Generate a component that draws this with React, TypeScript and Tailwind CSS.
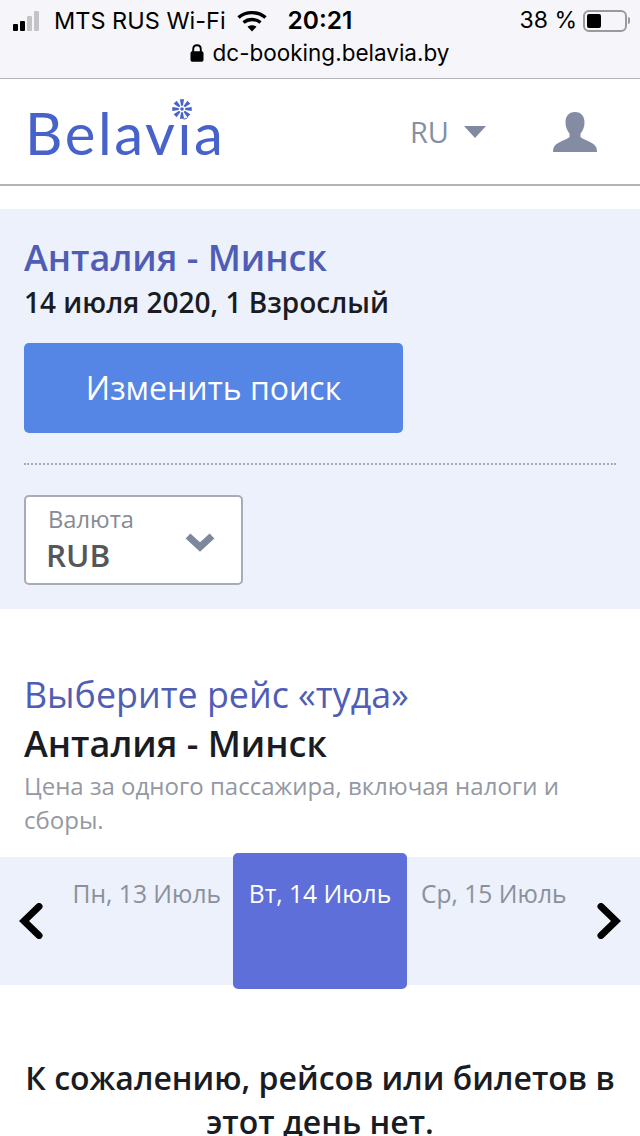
function Signal() {
  return (
    <div className="flex items-end gap-[2px] h-[20px]">
      <span className="w-[5px] h-[7px] rounded-[1px] bg-black" />
      <span className="w-[5px] h-[10px] rounded-[1px] bg-black" />
      <span className="w-[5px] h-[15px] rounded-[1px] bg-[#c4c4c6]" />
      <span className="w-[5px] h-[20px] rounded-[1px] bg-[#c4c4c6]" />
    </div>
  );
}

function Wifi() {
  return (
    <svg width="30" height="22" viewBox="0 0 30 22" fill="none" stroke="black" strokeWidth="3.4">
      <path d="M1.5 7.5C9 1 21 1 28.5 7.5" />
      <path d="M6.5 12.5C11.5 8.5 18.5 8.5 23.5 12.5" />
      <path d="M15 21.5L10.5 16.8C13 14.8 17 14.8 19.5 16.8Z" fill="black" stroke="none" />
    </svg>
  );
}

function Battery() {
  return (
    <div className="flex items-center gap-[1px]">
      <div className="w-[44px] h-[22px] rounded-[6px] border-2 border-[#9a9a9c] p-[2px]">
        <div className="w-[14px] h-full rounded-[2px] bg-black" />
      </div>
      <span className="w-[2px] h-[7px] rounded-r-sm bg-[#9a9a9c]" />
    </div>
  );
}

function LockIcon() {
  return (
    <svg width="14" height="18" viewBox="0 0 14 18" fill="black">
      <path d="M3.2 8V5.2C3.2 2.9 4.8 1.2 7 1.2S10.8 2.9 10.8 5.2V8" fill="none" stroke="black" strokeWidth="1.9" />
      <rect x="0.5" y="7.2" width="13" height="10.6" rx="1.8" />
    </svg>
  );
}

function Flower() {
  return (
    <svg width="20" height="20" viewBox="0 0 20 20" fill="#4763c9">
      <circle cx="10" cy="10" r="1.8" />
      {[0, 45, 90, 135, 180, 225, 270, 315].map((a) => (
        <path key={a} d="M7.9 0.3H12.1L10.9 6.8H9.1Z" transform={`rotate(${a} 10 10)`} />
      ))}
    </svg>
  );
}

function UserIcon() {
  return (
    <svg width="44" height="40" viewBox="0 0 44 40" fill="#838ca3">
      <path d="M22 0C15.5 0 12.5 4.5 12.5 10.5C12.5 15.5 14.5 19 16.5 21.5V25C14 28 4 29.5 1 35C0.4 36.2 0 38 0 40H44C44 38 43.6 36.2 43 35C40 29.5 30 28 27.5 25V21.5C29.5 19 31.5 15.5 31.5 10.5C31.5 4.5 28.5 0 22 0Z" />
    </svg>
  );
}

function Chevron({ dir }: { dir: "left" | "right" }) {
  return (
    <svg width="24" height="36" viewBox="0 0 24 36" fill="none" stroke="black" strokeWidth="7" strokeLinecap="round" strokeLinejoin="miter">
      <path d={dir === "left" ? "M20 3.5L5 18L20 32.5" : "M4 3.5L19 18L4 32.5"} />
    </svg>
  );
}

export default function App() {
  return (
    <div className="w-[640px] h-[1136px] overflow-hidden bg-white font-['Open_Sans',sans-serif]">
      <div className="h-[79px] bg-[#f6f6fa] border-b border-[#b5b5b7] font-['Inter',sans-serif] text-black">
        <div className="h-[41px] flex items-center pl-[13px] pr-[10px] text-[23.5px] leading-none">
          <Signal />
          <span className="ml-[15px]">MTS RUS Wi-Fi</span>
          <span className="ml-[11px]"><Wifi /></span>
          <span className="ml-[21px] text-[24.5px] font-semibold">20:21</span>
          <span className="ml-auto mr-[6px] text-[23px]">38 %</span>
          <Battery />
        </div>
        <div className="flex items-center justify-center gap-[9px] text-[22.5px] leading-none pt-[1px] pr-[1px]">
          <LockIcon />
          <span>dc-booking.belavia.by</span>
        </div>
      </div>

      <header className="h-[107px] border-b-2 border-[#b4b4b4] flex items-center pl-[25px] pr-[43px]">
        <div className="relative mt-[3px]">
          <span className="block font-['Lato',sans-serif] font-normal text-[58px] leading-none text-[#4763c9] tracking-[2.6px]">Belavia</span>
          <span className="absolute left-[147px] top-[-5px] flex rounded-full bg-white"><Flower /></span>
        </div>
        <span className="ml-auto text-[29px] leading-none text-[#868fa3]">RU</span>
        <span className="ml-[15px] w-0 h-0 border-x-[11px] border-x-transparent border-t-[12px] border-t-[#7f8aa1]" />
        <span className="ml-[67px]"><UserIcon /></span>
      </header>

      <section className="mt-[23px] h-[400px] bg-[#ecf1fb] px-[24px] pt-[27px]">
        <h1 className="text-[36px] leading-[44px] font-semibold text-[#4f5db5]">Анталия - Минск</h1>
        <p className="mt-[4px] text-[28px] leading-[36px] font-semibold text-[#1a1c24]">14 июля 2020, 1 Взрослый</p>
        <button className="mt-[23px] w-[379px] h-[90px] rounded-[5px] bg-[#5585e5] text-white text-[32px]">Изменить поиск</button>
        <div className="mt-[30px] w-[592px] border-t-2 border-dotted border-[#a4a9b5]" />
        <div className="mt-[30px] w-[219px] h-[90px] rounded-[5px] border-2 border-[#a8acb8] bg-white flex items-center pl-[20px] pr-[26px]">
          <div className="flex flex-col">
            <span className="pl-[2px] text-[23.7px] leading-[27px] text-[#868b96]">Валюта</span>
            <span className="mt-[2px] text-[31.5px] leading-[40px] font-semibold text-[#54565c]">RUB</span>
          </div>
          <svg className="ml-auto mt-[4px]" width="30" height="20" viewBox="0 0 30 20" fill="none" stroke="#7f879c" strokeWidth="7">
            <path d="M3 4L15 15L27 4" />
          </svg>
        </div>
      </section>

      <section className="px-[24px] pt-[62px]">
        <h2 className="text-[35.8px] leading-[46px] text-[#4f5db5]">Выберите рейс «туда»</h2>
        <h3 className="mt-[4px] text-[36px] leading-[46px] font-semibold text-[#1a1c24]">Анталия - Минск</h3>
        <p className="mt-[2px] text-[24px] leading-[34px] text-[#9398a3]">Цена за одного пассажира, включая налоги и сборы.</p>
      </section>

      <div className="mt-[20px] h-[128px] bg-[#ecf1fb] flex items-start relative">
        <div className="w-[233px] h-full flex items-center pl-[19px] relative">
          <Chevron dir="left" />
          <span className="absolute right-[12px] top-[21px] text-[24.6px] leading-[32px] font-medium text-[#8b909c] whitespace-nowrap">Пн, 13 Июль</span>
        </div>
        <div className="w-[174px] h-[136px] -mt-[4px] rounded-[5px] bg-[#5f6fd9] text-white text-[24.6px] leading-[32px] font-medium text-center pt-[25px] whitespace-nowrap">Вт, 14 Июль</div>
        <div className="flex-1 h-full flex items-center justify-end pr-[19px] relative">
          <span className="absolute left-[14px] top-[21px] text-[24.6px] leading-[32px] font-medium text-[#8b909c] whitespace-nowrap">Ср, 15 Июль</span>
          <Chevron dir="right" />
        </div>
      </div>

      <p className="mt-[71px] px-[10px] text-center text-[32px] leading-[44px] font-semibold text-[#1a1c24]">К сожалению, рейсов или билетов в этот день нет.</p>
    </div>
  );
}
